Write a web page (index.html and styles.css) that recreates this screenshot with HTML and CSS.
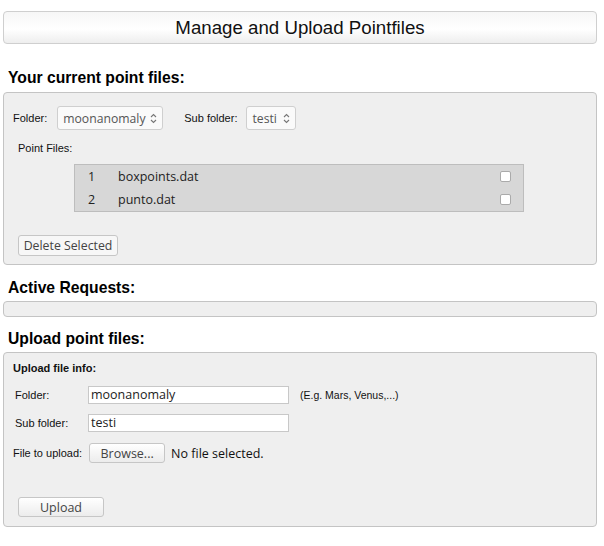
FILE: index.html
```html
<!DOCTYPE html>
<html>
<head>
<meta charset="utf-8">
<link rel="stylesheet" href="styles.css">
</head>
<body>
<div class="page">
  <div class="titlebar">Manage and Upload Pointfiles</div>

  <h2 class="heading h-current">Your current point files:</h2>
  <div class="panel panel-current">
    <div class="folder-row">
      <span class="lbl">Folder:</span>
      <span class="select sel-folder"><span class="seltext">moonanomaly</span><svg class="arrows" width="7" height="11" viewBox="0 0 7 11"><path d="M1 4 L3.5 1.5 L6 4" fill="none" stroke="#777" stroke-width="1.1"/><path d="M1 7 L3.5 9.5 L6 7" fill="none" stroke="#777" stroke-width="1.1"/></svg></span>
      <span class="lbl lbl-sub">Sub folder:</span>
      <span class="select sel-sub"><span class="seltext">testi</span><svg class="arrows" width="7" height="11" viewBox="0 0 7 11"><path d="M1 4 L3.5 1.5 L6 4" fill="none" stroke="#777" stroke-width="1.1"/><path d="M1 7 L3.5 9.5 L6 7" fill="none" stroke="#777" stroke-width="1.1"/></svg></span>
    </div>
    <div class="lbl pf-label">Point Files:</div>
    <div class="filetable">
      <div class="frow"><span class="num">1</span><span class="fname">boxpoints.dat</span><span class="cb"></span></div>
      <div class="frow"><span class="num">2</span><span class="fname">punto.dat</span><span class="cb"></span></div>
    </div>
    <button class="btn btn-delete">Delete Selected</button>
  </div>

  <h2 class="heading h-active">Active Requests:</h2>
  <div class="requests"></div>

  <h2 class="heading h-upload">Upload point files:</h2>
  <div class="panel panel-upload">
    <div class="info-title">Upload file info:</div>
    <div class="urow r-folder">
      <span class="lbl ulbl">Folder:</span>
      <span class="input">moonanomaly</span>
      <span class="lbl hint">(E.g. Mars, Venus,...)</span>
    </div>
    <div class="urow r-sub">
      <span class="lbl ulbl">Sub folder:</span>
      <span class="input">testi</span>
    </div>
    <div class="urow r-file">
      <span class="lbl">File to upload:</span>
      <button class="btn btn-browse">Browse...</button>
      <span class="nofile">No file selected.</span>
    </div>
    <button class="btn btn-upload">Upload</button>
  </div>
</div>
</body>
</html>
```
FILE: styles.css
```css
* { box-sizing: border-box; }
html, body { margin: 0; padding: 0; background: #fff; }
body { font-family: "Liberation Sans", Arial, sans-serif; color: #111; }
.page { padding: 11px 7px 0 3px; width: 604px; }

.titlebar {
  height: 33px;
  border: 1px solid #cfcfcf;
  border-radius: 4px;
  background: linear-gradient(#f6f6f6, #ffffff 55%, #eeeeee);
  font-size: 18.7px;
  line-height: 31px;
  text-align: center;
  color: #111;
}

.heading {
  font-size: 15.7px;
  font-weight: bold;
  margin: 0;
  padding-left: 5px;
  color: #000;
  line-height: 18px;
}
.h-current { margin-top: 25px; margin-bottom: 5px; }
.h-active { margin-top: 14px; margin-bottom: 4px; }
.h-upload { margin-top: 13px; margin-bottom: 4px; }

.panel {
  background: #efefef;
  border: 1px solid #c4c4c4;
  border-radius: 4px;
}
.panel-current { height: 173px; padding: 13px 0 0 9px; }

.lbl { font-size: 11px; color: #111; }

.folder-row { display: flex; align-items: center; height: 24px; }
.select {
  display: inline-flex;
  align-items: center;
  justify-content: space-between;
  height: 24px;
  border: 1px solid #cfcfcf;
  border-radius: 3px;
  background: #fafafa;
  font-family: "Open Sans", "DejaVu Sans", sans-serif;
  font-size: 12.2px;
  color: #555;
  padding: 0 5px 0 5px;
}
.sel-folder { margin-left: 10px; width: 106px; }
.sel-sub { margin-left: 9px; width: 50px; }
.lbl-sub { margin-left: 21px; }
.arrows { display: block; flex: none; }

.pf-label { margin: 12px 0 0 5px; line-height: 12px; }

.filetable {
  margin: 10px 0 0 61px;
  width: 450px;
  background: #d7d7d7;
  border: 1px solid #bdbdbd;
}
.frow {
  display: flex;
  align-items: center;
  height: 23px;
  font-family: "Open Sans", "DejaVu Sans", sans-serif;
  font-size: 12.5px;
  color: #222;
}
.num { width: 43px; padding-left: 13px; }
.fname { flex: 1; }
.cb {
  width: 11px; height: 11px;
  border: 1px solid #aaa;
  border-radius: 2px;
  background: #fff;
  margin-right: 12px;
}

.btn {
  display: block;
  border: 1px solid #c6c6c6;
  border-radius: 3px;
  background: linear-gradient(#ffffff, #ececec);
  font-family: "Open Sans", "DejaVu Sans", sans-serif;
  color: #444;
  padding: 0;
  cursor: pointer;
}
.btn-delete {
  margin: 23px 0 0 5px;
  width: 100px;
  height: 21px;
  font-size: 12.3px;
  background: #f7f7f7;
}

.requests {
  height: 16px;
  background: #efefef;
  border: 1px solid #c4c4c4;
  border-radius: 4px;
}

.panel-upload { height: 175px; padding: 9px 0 0 9px; }
.info-title { font-size: 11px; font-weight: bold; line-height: 13px; }

.urow { display: flex; align-items: center; }
.r-folder { margin-top: 11px; height: 18px; }
.r-sub { margin-top: 10px; height: 18px; }
.r-file { margin-top: 11px; height: 20px; }
.ulbl { width: 75px; padding-left: 2px; }
.input {
  width: 201px;
  height: 18px;
  border: 1px solid #c8c8c8;
  background: #fff;
  font-family: "Open Sans", "DejaVu Sans", sans-serif;
  font-size: 12.5px;
  line-height: 16px;
  color: #222;
  padding-left: 2px;
}
.hint { margin-left: 11px; font-size: 10.5px; }
.btn-browse {
  margin-left: 7px;
  width: 76px;
  height: 20px;
  font-size: 12.5px;
  color: #444;
}
.nofile {
  margin-left: 6px;
  font-family: "Open Sans", "DejaVu Sans", sans-serif;
  font-size: 12.5px;
  color: #111;
}
.btn-upload {
  margin: 34px 0 0 5px;
  width: 86px;
  height: 20px;
  font-size: 12.5px;
  color: #444;
}
```
